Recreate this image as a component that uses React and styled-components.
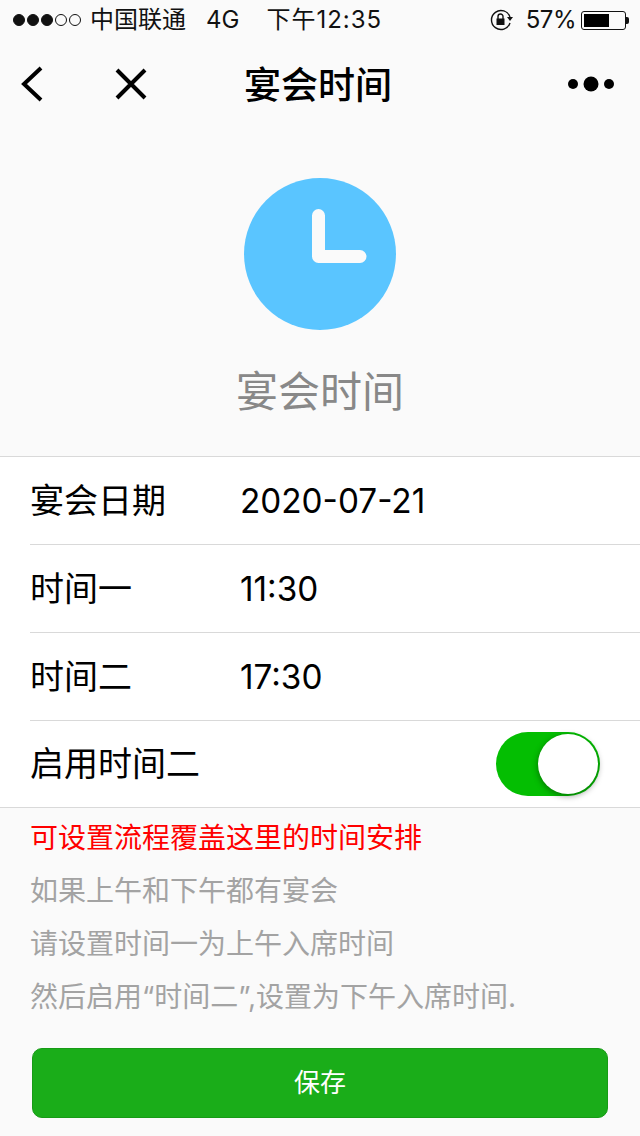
import styled, { createGlobalStyle } from "styled-components"

const GlobalStyle = createGlobalStyle`
    html, body {
        margin: 0;
        padding: 0;
        background: #fafafa;
    }

    * {
        box-sizing: border-box;
        font-family: Inter, "Noto Sans CJK SC", sans-serif;
    }
`

const Page = styled.div`
    width: 640px;
    height: 1136px;
    overflow: hidden;
    display: flex;
    flex-direction: column;
    background: #fafafa;
`

const StatusBar = styled.div`
    height: 40px;
    display: flex;
    align-items: center;
    justify-content: space-between;
    padding: 0 12px 0 13px;
    font-size: 24px;
    color: #111;
`

const StatusGroup = styled.div`
    display: flex;
    align-items: center;
`

const Signal = styled.div`
    display: flex;
    gap: 2px;
    margin-right: 9px;
`

const Dot = styled.span`
    width: 12px;
    height: 12px;
    border-radius: 50%;
    border: 1px solid #111;
    background: ${(props) => (props.$on ? "#111" : "transparent")};
`

const StatusText = styled.span`
    margin-left: ${(props) => props.$gap || 0}px;
    letter-spacing: ${(props) => props.$track || 0}px;
    white-space: nowrap;
    line-height: 40px;
`

const Battery = styled.div`
    position: relative;
    width: 45px;
    height: 19px;
    margin-left: 5px;
    margin-right: 2px;
    padding: 2px;
    border: 1px solid #111;
    border-radius: 3px;

    &::before {
        content: "";
        display: block;
        width: 25px;
        height: 100%;
        background: #000;
    }

    &::after {
        content: "";
        position: absolute;
        right: -4px;
        top: 5px;
        width: 3px;
        height: 7px;
        background: #111;
        border-radius: 0 2px 2px 0;
    }
`

const NavBar = styled.div`
    height: 88px;
    display: flex;
    align-items: center;
    justify-content: space-between;
    padding: 0 26px 0 20px;
    position: relative;
`

const NavLeft = styled.div`
    display: flex;
    align-items: center;
    gap: 70px;
`

const NavTitle = styled.h1`
    position: absolute;
    left: 0;
    right: 4px;
    top: 2px;
    margin: 0;
    text-align: center;
    font-size: 37px;
    line-height: 88px;
    font-weight: 500;
    color: #000;
`

const Hero = styled.div`
    height: 328px;
    padding-top: 50px;
    display: flex;
    flex-direction: column;
    align-items: center;
`

const ClockBadge = styled.div`
    width: 152px;
    height: 152px;
    border-radius: 50%;
    background: #5ac5ff;
`

const HeroTitle = styled.div`
    margin-top: 32px;
    font-size: 42px;
    line-height: 60px;
    color: #888;
`

const List = styled.div`
    background: #fff;
    border-top: 1px solid #d9d9d9;
    border-bottom: 1px solid #d9d9d9;
`

const Row = styled.div`
    height: ${(props) => (props.$short ? 87 : 88)}px;
    margin-left: 30px;
    display: flex;
    align-items: center;
    border-top: ${(props) => (props.$first ? "none" : "1px solid #d9d9d9")};
    color: #000;
`

const Label = styled.div`
    width: 210px;
    font-size: 34px;
    line-height: 50px;
    white-space: nowrap;
`

const Value = styled.div`
    font-size: 33.3px;
    line-height: 50px;
`

const Switch = styled.div`
    position: relative;
    width: 104px;
    height: 64px;
    margin-left: auto;
    margin-right: 40px;
    border-radius: 32px;
    background: #04be02;

    &::after {
        content: "";
        position: absolute;
        right: 2px;
        top: 2px;
        width: 60px;
        height: 60px;
        border-radius: 50%;
        background: #fff;
        box-shadow: 0 2px 6px rgba(0, 0, 0, 0.4);
    }
`

const Notes = styled.div`
    padding: 4px 30px 0;
`

const Note = styled.p`
    margin: 0;
    font-size: 28px;
    line-height: 53px;
    white-space: nowrap;
    color: ${(props) => (props.$alert ? "#ff0000" : "#a3a3a3")};
`

const SaveButton = styled.button`
    display: block;
    width: 576px;
    height: 70px;
    margin: 24px 0 0 32px;
    padding: 0 0 5px;
    border: 1px solid #179b16;
    border-radius: 10px;
    background: #1aad19;
    color: #fff;
    font-size: 26px;
`

function ClockIcon() {
    return (
        <svg width="152" height="152" viewBox="0 0 152 152" style={{ display: "block" }}>
            <path d="M74.5 37.5 V78.5 H116" fill="none" stroke="#fafafa" strokeWidth="13" strokeLinecap="round" strokeLinejoin="round" />
        </svg>
    )
}

function BackIcon() {
    return (
        <svg width="24" height="36" viewBox="0 0 24 36" style={{ display: "block" }}>
            <path d="M21 2 L4 18 L21 34" fill="none" stroke="#000" strokeWidth="4" />
        </svg>
    )
}

function CloseIcon() {
    return (
        <svg width="34" height="34" viewBox="0 0 34 34" style={{ display: "block" }}>
            <path d="M3 3 L31 31 M31 3 L3 31" fill="none" stroke="#000" strokeWidth="4" />
        </svg>
    )
}

function MoreIcon() {
    return (
        <svg width="46" height="16" viewBox="0 0 46 16" style={{ display: "block" }}>
            <circle cx="5" cy="8" r="5" fill="#000" />
            <circle cx="23" cy="8" r="7.5" fill="#000" />
            <circle cx="41" cy="8" r="5" fill="#000" />
        </svg>
    )
}

function RotationLockIcon() {
    return (
        <svg width="24" height="22" viewBox="0 0 24 22" style={{ display: "block" }}>
            <path d="M20 14 A9.5 9.5 0 1 1 20 8" fill="none" stroke="#111" strokeWidth="1.4" />
            <path d="M17 8 H23 L20 12 Z" fill="#111" />
            <rect x="6.5" y="9.5" width="8" height="6.5" fill="#111" />
            <path d="M8 10 V7.5 A2.5 2.5 0 0 1 13 7.5 V10" fill="none" stroke="#111" strokeWidth="1.4" />
        </svg>
    )
}

export default function App() {
    return (
        <Page>
            <GlobalStyle />
            <StatusBar>
                <StatusGroup>
                    <Signal>
                        <Dot $on />
                        <Dot $on />
                        <Dot $on />
                        <Dot />
                        <Dot />
                    </Signal>
                    <StatusText>中国联通</StatusText>
                    <StatusText $gap={20}>4G</StatusText>
                    <StatusText $gap={27} $track={1}>下午12:35</StatusText>
                </StatusGroup>
                <StatusGroup>
                    <RotationLockIcon />
                    <StatusText $gap={12} $track={-0.5}>57%</StatusText>
                    <Battery />
                </StatusGroup>
            </StatusBar>

            <NavBar>
                <NavLeft>
                    <BackIcon />
                    <CloseIcon />
                </NavLeft>
                <NavTitle>宴会时间</NavTitle>
                <MoreIcon />
            </NavBar>

            <Hero>
                <ClockBadge>
                    <ClockIcon />
                </ClockBadge>
                <HeroTitle>宴会时间</HeroTitle>
            </Hero>

            <List>
                <Row $first $short>
                    <Label>宴会日期</Label>
                    <Value>2020-07-21</Value>
                </Row>
                <Row>
                    <Label>时间一</Label>
                    <Value>11:30</Value>
                </Row>
                <Row>
                    <Label>时间二</Label>
                    <Value>17:30</Value>
                </Row>
                <Row $short>
                    <Label>启用时间二</Label>
                    <Switch />
                </Row>
            </List>

            <Notes>
                <Note $alert>可设置流程覆盖这里的时间安排</Note>
                <Note>如果上午和下午都有宴会</Note>
                <Note>请设置时间一为上午入席时间</Note>
                <Note>然后启用“时间二”,设置为下午入席时间.</Note>
            </Notes>

            <SaveButton>保存</SaveButton>
        </Page>
    )
}
